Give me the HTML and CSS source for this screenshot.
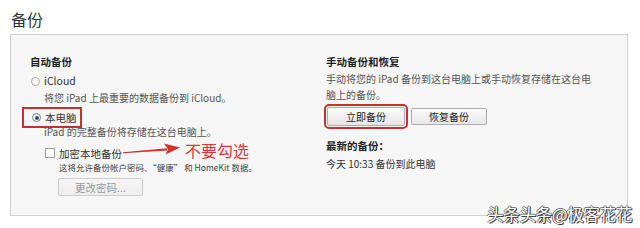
FILE: index.html
```html
<!DOCTYPE html>
<html lang="zh-CN">
<head>
<meta charset="utf-8">
<title>备份</title>
<link rel="stylesheet" href="styles.css">
</head>
<body>
<div class="page">
  <div class="title">备份</div>
  <div class="panel">
    <div class="col col-left">
      <div class="heading">自动备份</div>
      <div class="opt opt-icloud"><span class="radio"></span><span>iCloud</span></div>
      <div class="desc">将您 iPad 上最重要的数据备份到 iCloud。</div>
      <div class="opt opt-local"><span class="radio on"></span><span>本电脑</span></div>
      <div class="desc desc2">iPad 的完整备份将存储在这台电脑上。</div>
      <div class="check-row">
        <span class="checkbox"></span>
        <span class="check-label">加密本地备份</span>
        <svg class="arrow" width="58" height="16" viewBox="0 0 58 16">
          <path d="M0 10.2 L44 6.2 L44.4 8.6 L0 11.2 Z" fill="#d8302f"/>
          <path d="M41 1.5 L57 5.6 L42.5 12.5 L45 7.2 Z" fill="#d8302f"/>
        </svg>
        <span class="note">不要勾选</span>
      </div>
      <div class="small">这将允许备份帐户密码、“健康” 和 HomeKit 数据。</div>
      <button class="btn btn-disabled">更改密码...</button>
    </div>
    <div class="col col-right">
      <div class="heading">手动备份和恢复</div>
      <div class="desc desc-right">手动将您的 iPad 备份到这台电脑上或手动恢复存储在这台电脑上的备份。</div>
      <div class="btn-row">
        <button class="btn btn-main">立即备份</button>
        <button class="btn btn-restore">恢复备份</button>
      </div>
      <div class="heading latest">最新的备份：</div>
      <div class="text latest-time">今天 10:33 备份到此电脑</div>
    </div>
  </div>
  <div class="watermark">头条头条@极客花花</div>
</div>
</body>
</html>
```
FILE: styles.css
```css
* { box-sizing: border-box; }
html, body { margin: 0; padding: 0; background: #ffffff; }
body {
  font-family: "Noto Sans CJK SC", "Microsoft YaHei", "Noto Sans", sans-serif;
  color: #333333;
  width: 640px;
  height: 228px;
  overflow: hidden;
}
.page { position: relative; width: 640px; height: 228px; }
.title {
  padding: 9px 0 0 11px;
  font-size: 16px;
  line-height: 20px;
  height: 29px;
  color: #333;
}
.panel {
  margin: 5px 12px 0 10px;
  height: 182px;
  border: 1px solid #d2d2d2;
  background: #f6f6f6;
  display: grid;
  grid-template-columns: 296px 1fr;
  padding: 19px 0 0 19px;
}
.col { display: flex; flex-direction: column; align-items: flex-start; }
.heading {
  font-size: 10.5px;
  font-weight: bold;
  line-height: 16px;
  color: #1e1e1e;
}
.opt {
  display: flex;
  align-items: center;
  font-size: 10.5px;
  color: #333;
}
.opt-icloud { margin-top: 3px; line-height: 16px; margin-left: 1px; }
.opt-local {
  margin-top: 5px;
  line-height: 15px;
  margin-left: -5px;
  padding: 0 2px 0 7px;
  outline: 2px solid #c6302f;
  outline-offset: 1px;
}
.radio {
  width: 9px;
  height: 9px;
  border-radius: 50%;
  border: 1px solid #a9a9a9;
  background: linear-gradient(#f2f2f2, #ffffff);
  margin-right: 4px;
  position: relative;
  flex: none;
}
.radio.on { border-color: #6f7f93; }
.radio.on::after {
  content: "";
  position: absolute;
  left: 1.5px; top: 1.5px;
  width: 4px; height: 4px;
  border-radius: 50%;
  background: #2d4f80;
}
.desc {
  font-size: 10px;
  line-height: 14px;
  color: #555;
  margin-top: 2px;
  margin-left: 14px;
}
.desc2 { margin-top: 0; }
.check-row {
  display: flex;
  align-items: center;
  height: 16px;
  margin-top: 6px;
  margin-left: 15px;
  font-size: 10.5px;
  color: #333;
}
.checkbox {
  width: 10px;
  height: 10px;
  border: 1px solid #9a9a9a;
  background: #fff;
  margin-right: 4px;
  flex: none;
}
.arrow { flex: none; margin-left: 1px; margin-top: -6px; }
.note {
  font-size: 16px;
  line-height: 18px;
  color: #d9383a;
  margin-left: 4px;
  margin-top: -6px;
  white-space: nowrap;
}
.small {
  font-size: 8.5px;
  line-height: 12px;
  color: #444;
  margin-left: 29px;
  white-space: nowrap;
}
.btn {
  font-family: inherit;
  font-size: 10px;
  padding: 0;
  border: 1px solid #adadad;
  border-radius: 2px;
  background: linear-gradient(#fbfbfb, #e6e6e6);
  color: #222;
  line-height: 15px;
}
.btn-disabled {
  margin-top: 5px;
  margin-left: 28px;
  width: 85px;
  height: 18px;
  color: #9a9a9a;
  border-color: #cdcdcd;
  background: linear-gradient(#f6f6f6, #ededed);
  font-size: 10.5px;
}
.desc-right {
  margin-left: 0;
  margin-top: 1px;
  width: 268px;
  line-height: 16px;
}
.btn-row { display: flex; align-items: center; gap: 6px; margin-top: 4px; margin-left: 1px; }
.btn-main {
  width: 78px;
  height: 19px;
  outline: 2px solid #c6302f;
  outline-offset: 1px;
  border-radius: 2px;
}
.btn-restore { width: 76px; height: 17px; }
.latest { margin-top: 12px; }
.text { font-size: 10px; line-height: 16px; color: #333; margin-top: 2px; }
.watermark {
  position: absolute;
  right: 8px;
  bottom: 5px;
  font-size: 16.5px;
  line-height: 18px;
  color: #ffffff;
  letter-spacing: -0.3px;
  text-shadow: 1px 1px 0 #444, -1px 0 0 #666, 0 -1px 0 #777, 1px 0 0 #444;
}
```
